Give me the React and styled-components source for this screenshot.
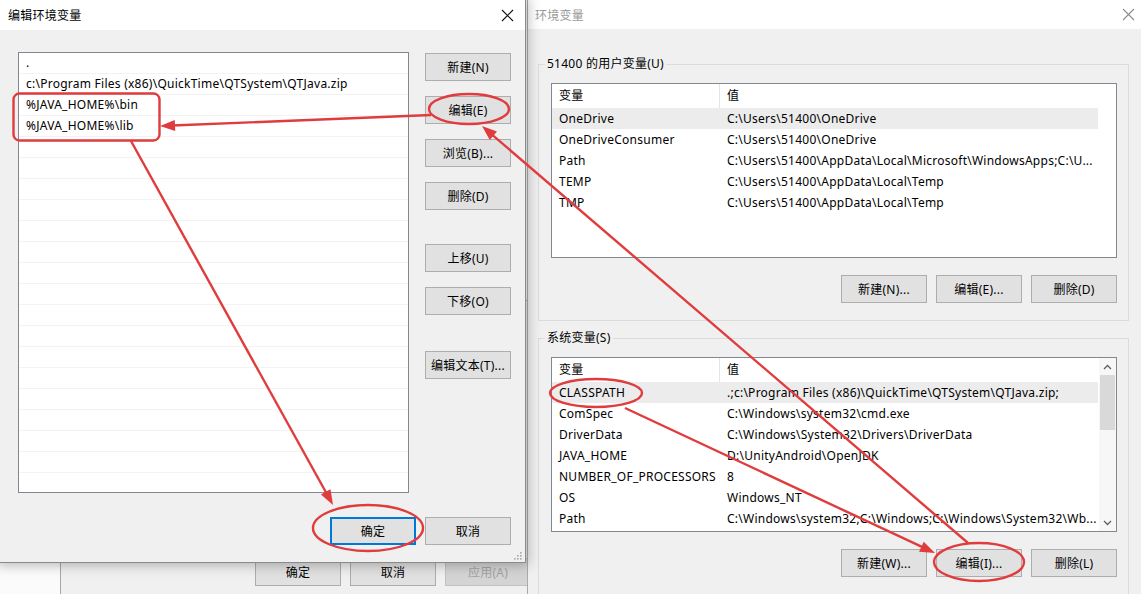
import React from "react";
import styled, { createGlobalStyle } from "styled-components";

const Global = createGlobalStyle`
  html, body { margin: 0; padding: 0; background: #fbfbfb; }
  body {
    font-family: "Segoe UI", "Noto Sans", "Noto Sans CJK SC", sans-serif;
    font-size: 12px;
    letter-spacing: 0.25px;
    color: #000;
  }
  * { box-sizing: border-box; }
`;

const Desktop = styled.div`
  position: relative;
  width: 1141px;
  height: 594px;
  overflow: hidden;
  background: #fbfbfb;
`;

const WindowFrame = styled.div`
  position: absolute;
  display: flex;
  flex-direction: column;
  background: #f0f0f0;
`;

const EditDialog = styled(WindowFrame)`
  left: -1px;
  top: -1px;
  width: 527px;
  height: 564px;
  border: 1px solid #8a8a8a;
  box-shadow: 0 0 12px 2px rgba(0, 0, 0, 0.28);
  z-index: 3;
`;

const EnvDialog = styled(WindowFrame)`
  left: 527px;
  top: -1px;
  width: 620px;
  height: 640px;
  border: 1px solid #ababab;
  z-index: 2;
`;

const SysPropsWindow = styled(WindowFrame)`
  left: 60px;
  top: 300px;
  width: 480px;
  height: 320px;
  border: 1px solid #a8a8a8;
  justify-content: flex-end;
  z-index: 1;
`;

const TitleBar = styled.div`
  height: ${(p) => p.$height}px;
  flex: none;
  background: #fff;
  display: flex;
  align-items: center;
  justify-content: space-between;
  padding-left: ${(p) => p.$pad}px;
`;

const TitleText = styled.span`
  font-size: 12px;
  color: ${(p) => (p.$inactive ? "#9a9a9a" : "#000")};
`;

const CloseBox = styled.div`
  width: 36px;
  height: 100%;
  display: flex;
  align-items: center;
  justify-content: center;
`;

const CloseIcon = ({ color }) => (
  <svg width="13" height="13" viewBox="0 0 13 13">
    <path d="M1 1 L12 12 M12 1 L1 12" stroke={color} strokeWidth="1.1" fill="none" />
  </svg>
);

/* ---------- Edit dialog ---------- */

const EditBody = styled.div`
  flex: 1;
  position: relative;
  display: grid;
  grid-template-columns: 391px 86px;
  grid-template-rows: 441px auto;
  column-gap: 16px;
  row-gap: 24px;
  align-content: start;
  padding: 22px 0 0 18px;
`;

const PathList = styled.div`
  background: #fff;
  border: 1px solid #828790;
  display: flex;
  flex-direction: column;
  overflow: hidden;
`;

const PathRow = styled.div`
  height: 21px;
  flex: none;
  border-bottom: 1px solid #f3f3f3;
  padding-left: 7px;
  line-height: 20px;
  white-space: nowrap;
`;

const ButtonColumn = styled.div`
  display: flex;
  flex-direction: column;
  padding-top: 1px;
`;

const WinButton = styled.button`
  width: 86px;
  height: 28px;
  flex: none;
  margin: 0;
  margin-top: ${(p) => p.$gap || 0}px;
  padding: 0;
  font-family: inherit;
  font-size: 12px;
  letter-spacing: 0.25px;
  color: ${(p) => (p.$disabled ? "#a3a3a3" : "#000")};
  background: ${(p) => (p.$disabled ? "#d4d4d4" : "#e1e1e1")};
  border: 1px solid ${(p) => (p.$focused ? "#0078d7" : p.$disabled ? "#c2c2c2" : "#adadad")};
  box-shadow: ${(p) => (p.$focused ? "inset 0 0 0 1px #0078d7" : "none")};
  white-space: nowrap;
`;

const FooterRow = styled.div`
  grid-column: 1 / -1;
  justify-self: end;
  display: flex;
  gap: 9px;
`;

const Grip = styled.svg`
  position: absolute;
  right: 3px;
  bottom: 2px;
`;

/* ---------- Env dialog ---------- */

const EnvBody = styled.div`
  flex: 1;
  display: flex;
  flex-direction: column;
  padding: 35px 0 0 10px;
`;

const GroupBox = styled.section`
  width: 591px;
  flex: none;
  border: 1px solid #dcdcdc;
  margin-top: ${(p) => p.$gap || 0}px;
  padding: 0 11px 17px 12px;
  display: flex;
  flex-direction: column;
`;

const GroupLegend = styled.div`
  align-self: flex-start;
  margin: -9px 0 0 -6px;
  padding: 0 2px;
  height: 16px;
  line-height: 16px;
  background: #f0f0f0;
`;

const VarList = styled.div`
  margin-top: 11px;
  width: 566px;
  height: 175px;
  background: #fff;
  border: 1px solid #828790;
  display: flex;
  justify-content: space-between;
`;

const VarRows = styled.div`
  width: 546px;
  display: flex;
  flex-direction: column;
`;

const RowGrid = styled.div`
  display: grid;
  grid-template-columns: 168px 1fr;
  align-items: center;
  flex: none;
  height: ${(p) => (p.$header ? 24 : 21)}px;
  background: ${(p) => (p.$selected ? "#ececec" : "transparent")};
`;

const Cell = styled.div`
  padding-left: 7px;
  white-space: nowrap;
  overflow: hidden;
  height: 100%;
  line-height: ${(p) => (p.$header ? 24 : 21)}px;
  border-right: ${(p) => (p.$divider ? "1px solid #e5e5e5" : "none")};
`;

const ScrollBar = styled.div`
  width: 17px;
  display: flex;
  flex-direction: column;
  background: #f7f7f7;
`;

const ScrollArrow = styled.div`
  height: 17px;
  flex: none;
  display: flex;
  align-items: center;
  justify-content: center;
`;

const ScrollTrack = styled.div`
  flex: 1;
`;

const ScrollThumb = styled.div`
  height: 55px;
  margin: 0 1px;
  background: #d9d9d9;
`;

const ButtonRow = styled.div`
  margin-top: 17px;
  display: flex;
  justify-content: flex-end;
  gap: 9px;
`;

const SysButtonRow = styled.div`
  display: flex;
  justify-content: flex-end;
  gap: 9px;
  padding: 0 8px 33px 0;
`;

const Chevron = ({ up }) => (
  <svg width="9" height="6" viewBox="0 0 9 6">
    <path
      d={up ? "M1 5 L4.5 1.5 L8 5" : "M1 1 L4.5 4.5 L8 1"}
      stroke="#606060"
      strokeWidth="1.3"
      fill="none"
    />
  </svg>
);

/* ---------- Annotations ---------- */

const Overlay = styled.svg`
  position: absolute;
  left: 0;
  top: 0;
  z-index: 10;
  pointer-events: none;
`;

const RED = "#e03b3d";

function Arrow({ x1, y1, x2, y2 }) {
  const dx = x2 - x1;
  const dy = y2 - y1;
  const len = Math.hypot(dx, dy);
  const ux = dx / len;
  const uy = dy / len;
  const L = 15;
  const W = 5.5;
  const bx = x2 - ux * L;
  const by = y2 - uy * L;
  const pts = [
    [x2, y2],
    [bx - uy * W, by + ux * W],
    [bx + uy * W, by - ux * W],
  ]
    .map((p) => p.join(","))
    .join(" ");
  return (
    <g>
      <line x1={x1} y1={y1} x2={bx + ux * 3} y2={by + uy * 3} stroke={RED} strokeWidth="2.4" />
      <polygon points={pts} fill={RED} />
    </g>
  );
}

const pathItems = [
  ".",
  "c:\\Program Files (x86)\\QuickTime\\QTSystem\\QTJava.zip",
  "%JAVA_HOME%\\bin",
  "%JAVA_HOME%\\lib",
];

const userVars = [
  ["OneDrive", "C:\\Users\\51400\\OneDrive"],
  ["OneDriveConsumer", "C:\\Users\\51400\\OneDrive"],
  ["Path", "C:\\Users\\51400\\AppData\\Local\\Microsoft\\WindowsApps;C:\\U..."],
  ["TEMP", "C:\\Users\\51400\\AppData\\Local\\Temp"],
  ["TMP", "C:\\Users\\51400\\AppData\\Local\\Temp"],
];

const sysVars = [
  ["CLASSPATH", ".;c:\\Program Files (x86)\\QuickTime\\QTSystem\\QTJava.zip;"],
  ["ComSpec", "C:\\Windows\\system32\\cmd.exe"],
  ["DriverData", "C:\\Windows\\System32\\Drivers\\DriverData"],
  ["JAVA_HOME", "D:\\UnityAndroid\\OpenJDK"],
  ["NUMBER_OF_PROCESSORS", "8"],
  ["OS", "Windows_NT"],
  ["Path", "C:\\Windows\\system32;C:\\Windows;C:\\Windows\\System32\\Wb..."],
];

function VarTable({ rows, scroll }) {
  return (
    <VarList>
      <VarRows>
        <RowGrid $header>
          <Cell $header $divider>变量</Cell>
          <Cell $header>值</Cell>
        </RowGrid>
        {rows.map(([k, v], i) => (
          <RowGrid key={k + i} $selected={i === 0}>
            <Cell>{k}</Cell>
            <Cell>{v}</Cell>
          </RowGrid>
        ))}
      </VarRows>
      {scroll && (
        <ScrollBar>
          <ScrollArrow>
            <Chevron up />
          </ScrollArrow>
          <ScrollTrack>
            <ScrollThumb />
          </ScrollTrack>
          <ScrollArrow>
            <Chevron />
          </ScrollArrow>
        </ScrollBar>
      )}
    </VarList>
  );
}

export default function App() {
  const emptyRows = Array.from({ length: 18 });
  return (
    <Desktop>
      <Global />

      <SysPropsWindow>
        <SysButtonRow>
          <WinButton>确定</WinButton>
          <WinButton>取消</WinButton>
          <WinButton $disabled>应用(A)</WinButton>
        </SysButtonRow>
      </SysPropsWindow>

      <EnvDialog>
        <TitleBar $height={29} $pad={7}>
          <TitleText $inactive>环境变量</TitleText>
          <CloseBox>
            <CloseIcon color="#8c8c8c" />
          </CloseBox>
        </TitleBar>
        <EnvBody>
          <GroupBox>
            <GroupLegend>51400 的用户变量(U)</GroupLegend>
            <VarTable rows={userVars} />
            <ButtonRow>
              <WinButton>新建(N)...</WinButton>
              <WinButton>编辑(E)...</WinButton>
              <WinButton>删除(D)</WinButton>
            </ButtonRow>
          </GroupBox>
          <GroupBox $gap={17}>
            <GroupLegend>系统变量(S)</GroupLegend>
            <VarTable rows={sysVars} scroll />
            <ButtonRow>
              <WinButton>新建(W)...</WinButton>
              <WinButton>编辑(I)...</WinButton>
              <WinButton>删除(L)</WinButton>
            </ButtonRow>
          </GroupBox>
        </EnvBody>
      </EnvDialog>

      <EditDialog>
        <TitleBar $height={30} $pad={8}>
          <TitleText>编辑环境变量</TitleText>
          <CloseBox>
            <CloseIcon color="#111" />
          </CloseBox>
        </TitleBar>
        <EditBody>
          <PathList>
            {pathItems.map((t) => (
              <PathRow key={t}>{t}</PathRow>
            ))}
            {emptyRows.map((_, i) => (
              <PathRow key={"e" + i} />
            ))}
          </PathList>
          <ButtonColumn>
            <WinButton>新建(N)</WinButton>
            <WinButton $gap={15}>编辑(E)</WinButton>
            <WinButton $gap={15}>浏览(B)...</WinButton>
            <WinButton $gap={15}>删除(D)</WinButton>
            <WinButton $gap={34}>上移(U)</WinButton>
            <WinButton $gap={15}>下移(O)</WinButton>
            <WinButton $gap={36}>编辑文本(T)...</WinButton>
          </ButtonColumn>
          <FooterRow>
            <WinButton $focused>确定</WinButton>
            <WinButton>取消</WinButton>
          </FooterRow>
          <Grip width="9" height="9" viewBox="0 0 9 9">
            {[
              [7, 1],
              [4, 4],
              [7, 4],
              [1, 7],
              [4, 7],
              [7, 7],
            ].map(([x, y]) => (
              <rect key={x + "-" + y} x={x} y={y} width="1.6" height="1.6" fill="#a8a8a8" />
            ))}
          </Grip>
        </EditBody>
      </EditDialog>

      <Overlay width="1141" height="594" viewBox="0 0 1141 594">
        <g fill="none" stroke={RED} strokeWidth="2.4">
          <rect x="13.5" y="93.5" width="146" height="47" rx="6" />
          <ellipse cx="469" cy="109" rx="40" ry="15" />
          <ellipse cx="368" cy="528" rx="55" ry="23" />
          <ellipse cx="596" cy="393" rx="46" ry="14" />
          <ellipse cx="979" cy="562" rx="45" ry="19" />
        </g>
        <Arrow x1={431} y1={115} x2={160} y2={126} />
        <Arrow x1={131} y1={141} x2={333} y2={505} />
        <Arrow x1={625} y1={408} x2={935} y2={553} />
        <Arrow x1={968} y1={543} x2={482} y2={126} />
      </Overlay>
    </Desktop>
  );
}
